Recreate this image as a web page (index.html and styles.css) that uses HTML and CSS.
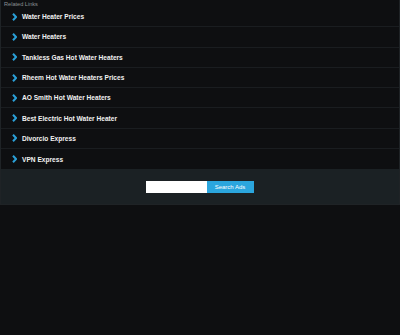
FILE: index.html
```html
<!DOCTYPE html>
<html lang="en">
<head>
    <meta charset="UTF-8">
    <meta name="viewport" content="width=device-width, initial-scale=1.0">
    <title>Related Links</title>
    <link rel="stylesheet" href="styles.css">
</head>
<body>
    <div class="box">
        <div class="box-title">Related Links</div>
        <ul class="links">
            <li><svg class="chev" width="5" height="8" viewBox="0 0 5 8"><polyline points="1,0.8 4,4 1,7.2" /></svg><a href="#">Water Heater Prices</a></li>
            <li><svg class="chev" width="5" height="8" viewBox="0 0 5 8"><polyline points="1,0.8 4,4 1,7.2" /></svg><a href="#">Water Heaters</a></li>
            <li><svg class="chev" width="5" height="8" viewBox="0 0 5 8"><polyline points="1,0.8 4,4 1,7.2" /></svg><a href="#">Tankless Gas Hot Water Heaters</a></li>
            <li><svg class="chev" width="5" height="8" viewBox="0 0 5 8"><polyline points="1,0.8 4,4 1,7.2" /></svg><a href="#">Rheem Hot Water Heaters Prices</a></li>
            <li><svg class="chev" width="5" height="8" viewBox="0 0 5 8"><polyline points="1,0.8 4,4 1,7.2" /></svg><a href="#">AO Smith Hot Water Heaters</a></li>
            <li><svg class="chev" width="5" height="8" viewBox="0 0 5 8"><polyline points="1,0.8 4,4 1,7.2" /></svg><a href="#">Best Electric Hot Water Heater</a></li>
            <li><svg class="chev" width="5" height="8" viewBox="0 0 5 8"><polyline points="1,0.8 4,4 1,7.2" /></svg><a href="#">Divorcio Express</a></li>
            <li><svg class="chev" width="5" height="8" viewBox="0 0 5 8"><polyline points="1,0.8 4,4 1,7.2" /></svg><a href="#">VPN Express</a></li>
        </ul>
        <div class="search">
            <input type="text" class="search-input">
            <button class="search-btn">Search Ads</button>
        </div>
    </div>
</body>
</html>
```

FILE: styles.css
```css
body {
    margin: 0;
    padding: 0;
    background-color: #0e0f11;
    font-family: "Liberation Sans", Arial, sans-serif;
    color: #fff;
}

.box {
    border: 1px solid #1f2326;
    border-top: none;
}

.box-title {
    height: 7px;
    line-height: 9px;
    padding-left: 3px;
    font-size: 5.6px;
    color: #8a8f93;
}

.links {
    list-style: none;
    margin: 0;
    padding: 0;
}

.links li {
    display: flex;
    align-items: center;
    height: 20.3px;
    border-bottom: 1px solid #1a1d20;
    box-sizing: border-box;
}

.links li:last-child {
    border-bottom: none;
}

.chev {
    display: block;
    margin-left: 11px;
    margin-right: 5px;
}

.chev polyline {
    fill: none;
    stroke: #2a9fd6;
    stroke-width: 2;
}

.links a {
    color: #f2f2f2;
    font-size: 6.6px;
    font-weight: bold;
    text-decoration: none;
}

.search {
    display: flex;
    justify-content: center;
    align-items: center;
    height: 35px;
    background-color: #1b2124;
}

.search-input {
    width: 61px;
    height: 12px;
    box-sizing: border-box;
    border: none;
    padding: 0;
    margin: 0 0 0 -1px;
    background: #fff;
}

.search-btn {
    width: 47px;
    height: 12px;
    border: none;
    padding: 0;
    background-color: #2ba6de;
    color: #fff;
    font-family: "Liberation Sans", Arial, sans-serif;
    font-size: 6px;
}
```
